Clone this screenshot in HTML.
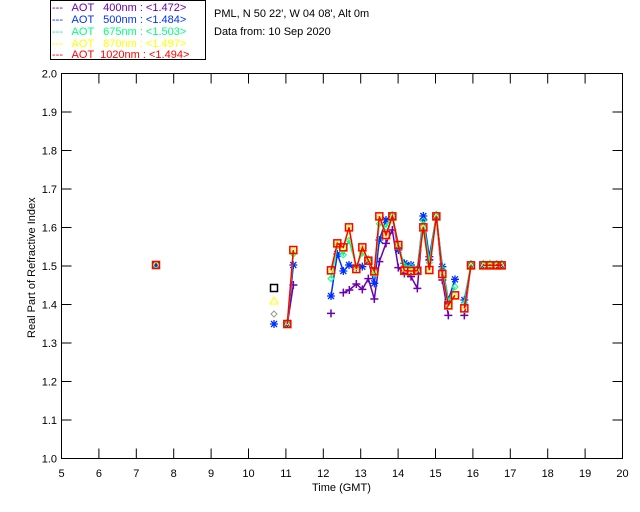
<!DOCTYPE html>
<html><head><meta charset="utf-8"><style>
body{margin:0;background:#fff;width:640px;height:512px;overflow:hidden}
svg{display:block}
text{font-family:"Liberation Sans",sans-serif;font-size:11px;white-space:pre}
</style></head><body>
<svg id="s" width="640" height="512" xmlns="http://www.w3.org/2000/svg">
<rect width="640" height="512" fill="#fff"/>
<rect x="50.5" y="0.5" width="155" height="59" fill="#fff" stroke="#000"/>
<g font-size="11">
<text x="52" y="11" fill="#6a00b0" xml:space="preserve">---   AOT   400nm : &lt;1.472&gt;</text>
<text x="52" y="23" fill="#0030ff" xml:space="preserve">---   AOT   500nm : &lt;1.484&gt;</text>
<text x="52" y="35" fill="#00ff80" xml:space="preserve">---   AOT   675nm : &lt;1.503&gt;</text>
<text x="52" y="47" fill="#ffff00" xml:space="preserve">---   AOT   870nm : &lt;1.497&gt;</text>
<text x="52" y="58" fill="#ff0000" xml:space="preserve">---   AOT  1020nm : &lt;1.494&gt;</text>
<text x="214" y="17" fill="#000">PML, N 50 22', W 04 08', Alt 0m</text>
<text x="214" y="35" fill="#000">Data from: 10 Sep 2020</text>
<text x="312" y="491" fill="#000">Time (GMT)</text>
<text transform="translate(35,338) rotate(-90)" fill="#000">Real Part of Refractive Index</text>
</g>
<rect x="61.5" y="73.5" width="561" height="385" fill="none" stroke="#000"/>
<g id="ax"></g>
<g id="data"></g>
</svg>
<script>
var NS="http://www.w3.org/2000/svg",ax=document.getElementById('ax'),dg=document.getElementById('data');
function el(t,a,p,txt){var e=document.createElementNS(NS,t);for(var k in a)e.setAttribute(k,a[k]);if(txt)e.textContent=txt;(p||ax).appendChild(e);return e;}
var L=61.5,R=622.5,T=73.5,B=458.5;
for(var h=5;h<=20;h++){var x=L+(h-5)*(R-L)/15;
 if(h>5&&h<20){el('line',{x1:x,y1:B,x2:x,y2:B-10,stroke:'#000'});el('line',{x1:x,y1:T,x2:x,y2:T+10,stroke:'#000'});}
 el('text',{x:x,y:477,'text-anchor':'middle',fill:'#000'},null,String(h));}
for(var i=0;i<=10;i++){var y=B-i*(B-T)/10;
 if(i>0&&i<10){el('line',{x1:L,y1:y,x2:L+10,y2:y,stroke:'#000'});el('line',{x1:R,y1:y,x2:R-10,y2:y,stroke:'#000'});}
 el('text',{x:57,y:y+4,'text-anchor':'end',fill:'#000'},null,(1+i/10).toFixed(1));}
function cv(a){return a.map(function(p){return [260+p[0]/3,200+p[1]/3];});}
var red=cv([[82,372],[100,150],[213,211],[232,130],[250,142],[267,82],[289,207],[307,142],[325,182],[343,214],[358,49],[378,105],[397,49],[415,135],[433,212],[453,213],[472,212],[490,82],[508,210],[529,49],[547,222],[565,316],[585,286],[613,325],[633,196],[670,196],[690,196],[710,196],[725,196]]);
var pur=cv([[82,372],[100,255],[213,340],[250,278],[268,270],[289,252],[307,268],[325,236],[343,297],[358,185],[378,130],[397,90],[415,203],[433,220],[453,230],[472,265],[490,60],[508,180],[529,50],[547,240],[565,346],[613,346],[633,196],[670,196],[690,196],[710,196],[725,196]]);
var blu=cv([[82,372],[100,195],[213,288],[232,162],[250,213],[267,195],[289,202],[307,200],[325,182],[343,250],[358,120],[378,60],[397,50],[415,150],[433,190],[453,195],[472,210],[490,48],[508,170],[529,49],[547,200],[565,300],[585,238],[613,300],[633,196],[670,196],[690,196],[710,196],[725,196]]);
var grn=red.map(function(p,i){var b=blu[i]||p;return [p[0],p[1]*0.6+b[1]*0.4-2];});
var yel=red.map(function(p){return [p[0],p[1]+1];});
function line(pts,c){
 var segs=[[]];pts.forEach(function(p,i){if(i>0&&p[0]-pts[i-1][0]>9)segs.push([]);segs[segs.length-1].push(p);});
 segs.forEach(function(s){if(s.length>1)el('polyline',{points:s.map(function(p){return p.join(',')}).join(' '),fill:'none',stroke:c,'stroke-width':1.5},dg);});}
function plus(p,c){el('path',{d:'M'+(p[0]-4)+','+p[1]+'h8M'+p[0]+','+(p[1]-4)+'v8',stroke:c,'stroke-width':1.5},dg);}
function star(p,c){el('path',{d:'M'+(p[0]-4)+','+p[1]+'h8M'+p[0]+','+(p[1]-4)+'v8M'+(p[0]-3)+','+(p[1]-3)+'l6,6M'+(p[0]+3)+','+(p[1]-3)+'l-6,6',stroke:c,'stroke-width':1.3},dg);}
function dia(p,c){el('path',{d:'M'+p[0]+','+(p[1]-3)+'l3,3l-3,3l-3,-3z',stroke:c,fill:'none'},dg);}
function tri(p,c){el('path',{d:'M'+p[0]+','+(p[1]-4)+'l4,7h-8z',stroke:c,fill:'none'},dg);}
function sq(p,c){el('rect',{x:p[0]-3.5,y:p[1]-3.5,width:7,height:7,stroke:c,fill:'none','stroke-width':1.5},dg);}
var P='#6a00b0',Bc='#0030ff',G='#00ff80',Y='#ffff00',Rc='#ff0000';
line(pur,P);pur.forEach(function(p){plus(p,P)});
line(blu,Bc);blu.forEach(function(p){star(p,Bc)});
line(grn,G);grn.forEach(function(p){dia(p,G)});
line(yel,Y);yel.forEach(function(p){tri(p,Y)});
line(red,Rc);red.forEach(function(p){sq(p,Rc)});
var s=[156,265];plus(s,P);star(s,Bc);dia(s,G);tri(s,Y);sq(s,Rc);
sq([274,288],'#000');tri([274,301],Y);dia([274,314],'#999');star([274,324],Bc);
</script>
</body></html>
